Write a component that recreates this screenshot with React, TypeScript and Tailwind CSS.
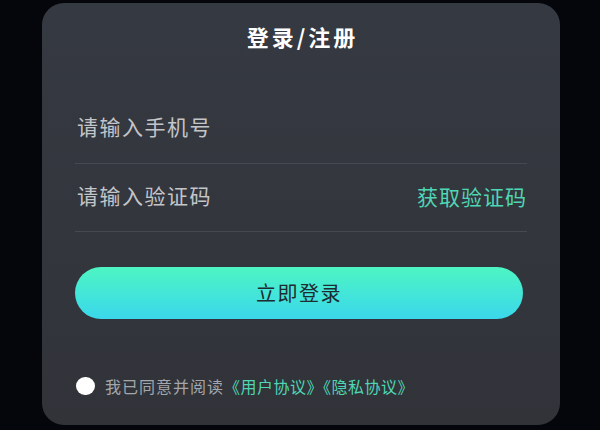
import React, { useState } from 'react';

const font = { fontFamily: '"Noto Sans CJK SC", "Noto Sans", sans-serif' };

export default function App() {
  const [agreed, setAgreed] = useState(false);

  return (
    <div className="w-[600px] h-[430px] bg-[#04060b] overflow-hidden" style={font}>
      <div className="ml-[42px] mt-[3px] w-[518px] h-[422px] rounded-[22px] bg-gradient-to-b from-[#353941] to-[#313339] px-[33px] flex flex-col">
        {/* Title */}
        <h1 className="mt-[18px] text-center text-white text-[22px] leading-[30px] font-bold tracking-[3px] pl-[3px]">
          登录/注册
        </h1>

        {/* Phone */}
        <div className="mt-[40px] h-[73px] flex items-center border-b border-[#464950]">
          <input
            type="tel"
            placeholder="请输入手机号"
            className="flex-1 bg-transparent outline-none text-[21px] tracking-[1.5px] text-white placeholder:text-[#c3c5c9] pl-[2px]"
          />
        </div>

        {/* Code */}
        <div className="h-[68px] pb-[4px] flex items-center border-b border-[#464950]">
          <input
            type="text"
            placeholder="请输入验证码"
            className="flex-1 min-w-0 bg-transparent outline-none text-[21px] tracking-[1.5px] text-white placeholder:text-[#c3c5c9] pl-[2px]"
          />
          <button className="text-[21px] tracking-[1px] text-[#4fd6b4] mt-[3px]">获取验证码</button>
        </div>

        {/* Submit */}
        <button className="mt-[35px] mr-[4px] h-[52px] rounded-full bg-gradient-to-b from-[#4ef5c2] to-[#3bd7eb] text-[#1e2b30] text-[20px] tracking-[1.5px]">
          立即登录
        </button>

        {/* Agreement */}
        <div className="mt-[57px] flex items-center gap-[10px] pl-[1px] h-[20px]">
          <button
            onClick={() => setAgreed(!agreed)}
            className={`w-[19px] h-[18px] rounded-full ${agreed ? 'bg-[#4fd6b4]' : 'bg-white'}`}
          />
          <p className="text-[16px] tracking-[1px] text-[#a3a6ab]">
            我已同意并阅读<span className="text-[#4fd6b4] tracking-[0.5px]">《用户协议》《隐私协议》</span>
          </p>
        </div>
      </div>
    </div>
  );
}
